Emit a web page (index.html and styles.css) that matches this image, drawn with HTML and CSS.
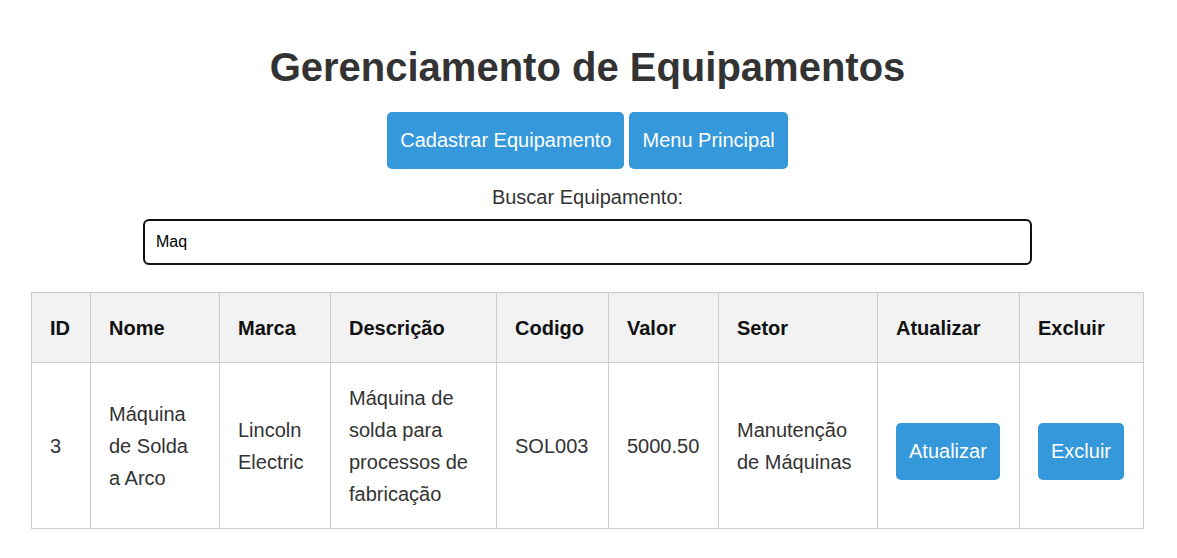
FILE: index.html
```html
<!DOCTYPE html>
<html lang="pt-BR">
<head>
<meta charset="utf-8">
<title>Gerenciamento de Equipamentos</title>
<link rel="stylesheet" href="styles.css">
</head>
<body>
<div class="page">
  <h1 class="title">Gerenciamento de Equipamentos</h1>
  <div class="actions">
    <button class="btn">Cadastrar Equipamento</button>
    <button class="btn">Menu Principal</button>
  </div>
  <label class="search-label" for="busca">Buscar Equipamento:</label>
  <input class="search" id="busca" type="text" value="Maq">
  <table class="grid">
    <colgroup>
      <col class="c-id"><col class="c-nome"><col class="c-marca"><col class="c-desc"><col class="c-cod"><col class="c-valor"><col class="c-setor"><col class="c-atu"><col class="c-exc">
    </colgroup>
    <thead>
      <tr>
        <th>ID</th><th>Nome</th><th>Marca</th><th>Descrição</th><th>Codigo</th><th>Valor</th><th>Setor</th><th>Atualizar</th><th>Excluir</th>
      </tr>
    </thead>
    <tbody>
      <tr>
        <td>3</td>
        <td>Máquina de Solda a Arco</td>
        <td>Lincoln Electric</td>
        <td>Máquina de solda para processos de fabricação</td>
        <td>SOL003</td>
        <td>5000.50</td>
        <td>Manutenção de Máquinas</td>
        <td><button class="btn row-btn">Atualizar</button></td>
        <td><button class="btn row-btn">Excluir</button></td>
      </tr>
    </tbody>
  </table>
</div>
</body>
</html>
```

FILE: styles.css
```css
html, body {
  margin: 0;
  padding: 0;
  background: #fff;
}
body {
  font-family: "Liberation Sans", Arial, sans-serif;
  color: #333;
}
.page {
  display: flex;
  flex-direction: column;
  align-items: center;
  padding: 44px 2px 20px 0;
}
.title {
  font-size: 40px;
  font-weight: bold;
  line-height: 46px;
  margin: 0 0 22px;
  color: #333;
}
.actions {
  display: flex;
  gap: 5px;
  margin-bottom: 17px;
}
.btn {
  font-family: "Liberation Sans", Arial, sans-serif;
  font-size: 20px;
  line-height: 23px;
  padding: 17px 13px;
  background: #3498db;
  color: #fff;
  border: none;
  border-radius: 5px;
}
.row-btn {
  margin-top: 10px;
}
.search-label {
  font-size: 20px;
  line-height: 23px;
  margin-bottom: 10px;
  color: #333;
}
.search {
  box-sizing: border-box;
  width: 889px;
  height: 46px;
  padding: 10px 11px;
  border: 2px solid #111;
  border-radius: 6px;
  font-family: "Liberation Sans", Arial, sans-serif;
  font-size: 16px;
  color: #000;
  margin: 0 0 27px;
  outline: none;
}
.grid {
  width: 1112px;
  table-layout: fixed;
  border-collapse: collapse;
  font-size: 20px;
  line-height: 32px;
}
.c-id { width: 59px; }
.c-nome { width: 129px; }
.c-marca { width: 111px; }
.c-desc { width: 166px; }
.c-cod { width: 112px; }
.c-valor { width: 110px; }
.c-setor { width: 159px; }
.c-atu { width: 142px; }
.c-exc { width: 124px; }
.grid th, .grid td {
  border: 1px solid #ccc;
  padding: 19px 18px 18px;
  text-align: left;
  vertical-align: middle;
}
.grid th {
  background: #f2f2f2;
  font-weight: bold;
  color: #111;
}
.grid td {
  color: #333;
}
```
